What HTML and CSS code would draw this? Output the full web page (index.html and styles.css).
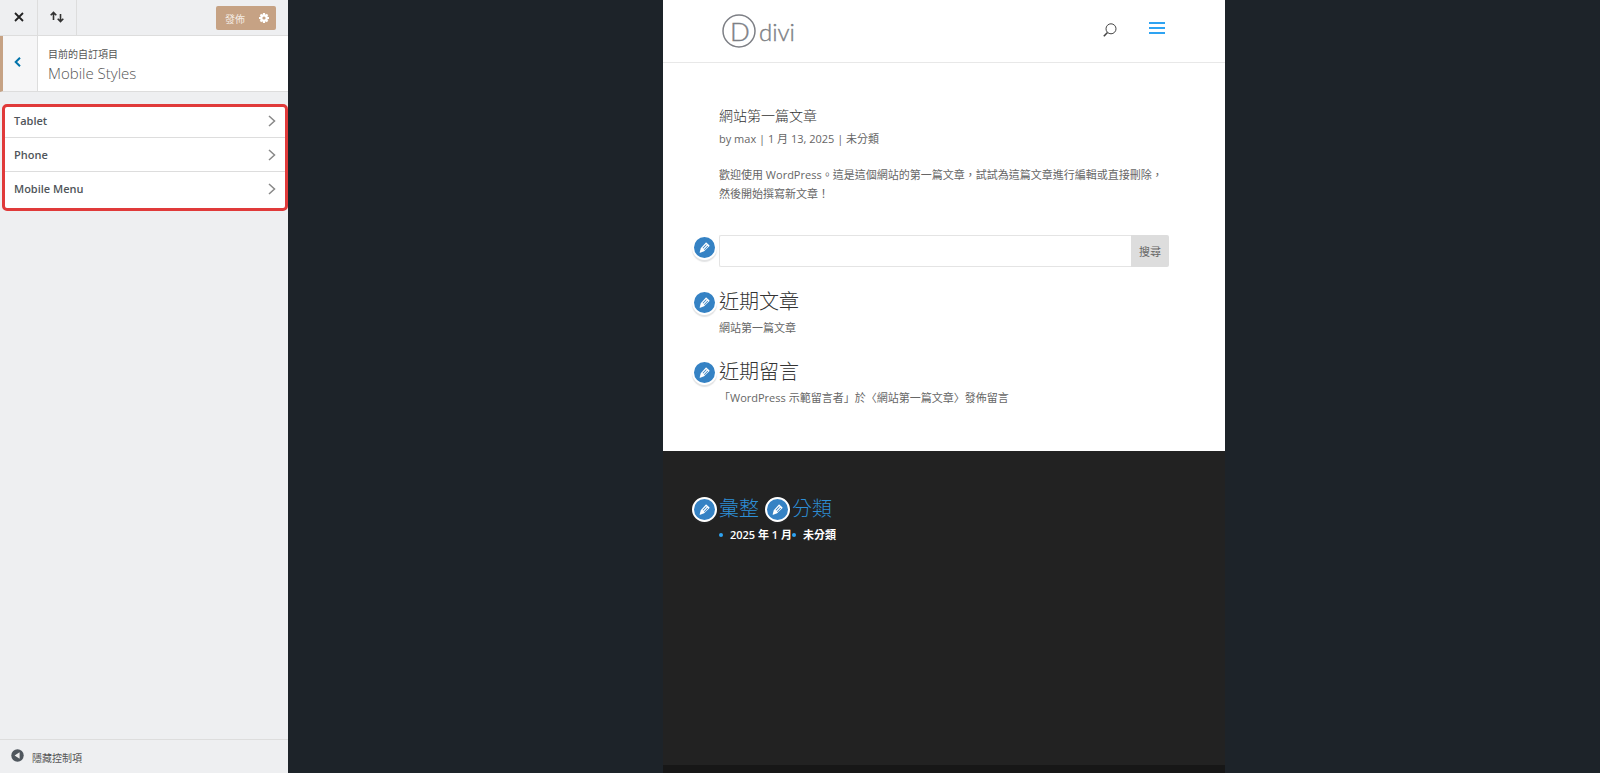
FILE: index.html
```
<!DOCTYPE html>
<html lang="zh-Hant">
<head>
	<meta charset="UTF-8">
	<title>Mobile Styles</title>
	<link rel="stylesheet" href="styles.css">
</head>
<body>
	<svg class="defs" aria-hidden="true">
		<symbol id="pencil" viewBox="0 0 20 20">
			<path fill="#fff" fill-rule="evenodd" d="M13.200 2.600l4.200 3.800c.5.5.5 1.100 0 1.600l-8 7.900-6 2.200c-.6.2-1-.2-.8-.8l1.600-6.100 7.600-8.500c.4-.5.9-.5 1.400-.1zM7 10.800l1 .9 5.400-5.900-1-.8zM9.200 12.900l1 .9 5.400-5.700-1-.9z"/>
		</symbol>
	</svg>
	<div class="customizer">
		<aside class="sidebar">
			<div class="topbar">
				<button type="button" class="close" aria-label="關閉">
					<svg width="10" height="10" viewBox="0 0 10 10"><path d="M1 1l8 8M9 1l-8 8" stroke="#222" stroke-width="1.800"/></svg>
				</button>
				<button type="button" class="sort" aria-label="切換">
					<svg width="14" height="12" viewBox="0 0 14 12" fill="none" stroke="#333" stroke-width="1.600"><path d="M3.500 9V1.500M.7 4.300l2.800-2.800 2.800 2.800M10.500 3v7.500M7.700 7.700l2.800 2.800 2.800-2.800"/></svg>
				</button>
				<button type="button" class="publish">
					<span>發佈</span>
					<svg width="10" height="10" viewBox="0 0 10 10"><path d="M5 0v10M0 5h10M1.500 1.500l7 7M8.500 1.500l-7 7" stroke="#fff" stroke-width="2.200"/><circle cx="5" cy="5" r="3.800" fill="#fff"/><circle cx="5" cy="5" r="1.600" fill="#c6a284"/></svg>
				</button>
			</div>
			<div class="panel-title">
				<button type="button" class="back" aria-label="返回">
					<svg width="7" height="10" viewBox="0 0 7 10"><path d="M6 .8L1.700 5 6 9.200" fill="none" stroke="#0073aa" stroke-width="2"/></svg>
				</button>
				<div class="panel-text">
					<span>目前的自訂項目</span>
					<h1>Mobile Styles</h1>
				</div>
			</div>
			<ul class="sections">
				<li><a href="#">Tablet<svg width="8" height="12" viewBox="0 0 8 12"><path d="M1 1l5.500 5L1 11"/></svg></a></li>
				<li><a href="#">Phone<svg width="8" height="12" viewBox="0 0 8 12"><path d="M1 1l5.500 5L1 11"/></svg></a></li>
				<li><a href="#">Mobile Menu<svg width="8" height="12" viewBox="0 0 8 12"><path d="M1 1l5.500 5L1 11"/></svg></a></li>
			</ul>
			<button type="button" class="collapse">
				<svg width="13" height="13" viewBox="0 0 13 13"><circle cx="6.500" cy="6.500" r="6.200" fill="#50575e"/><path d="M8.600 3.300v6.400L3.600 6.500z" fill="#eee"/></svg>
				<span>隱藏控制項</span>
			</button>
		</aside>
		<div class="preview">
			<div class="device">
				<header class="site-header">
					<a href="#" class="logo" aria-label="divi">
						<svg width="76" height="36" viewBox="0 0 76 36">
							<circle cx="18" cy="18" r="16" fill="none" stroke="#7d7f85" stroke-width="1.500"/>
							<text x="9" y="28" font-size="26">D</text>
							<text x="38" y="28" font-size="24">divi</text>
						</svg>
					</a>
					<button type="button" class="search-icon" aria-label="搜尋">
						<svg width="14" height="14" viewBox="0 0 14 14" fill="none" stroke="#444"><circle cx="8" cy="5.800" r="5"/><path d="M4.500 9.500L.8 13.200" stroke-width="1.600"/></svg>
					</button>
					<button type="button" class="menu-icon" aria-label="選單">
						<svg width="16" height="12" viewBox="0 0 16 12" stroke="#2ea3f2" stroke-width="2"><path d="M0 1h16M0 6h16M0 11h16"/></svg>
					</button>
				</header>
				<main class="content">
					<article>
						<h2>網站第一篇文章</h2>
						<p class="meta">by max | 1 月 13, 2025 | 未分類</p>
						<p>歡迎使用 WordPress。這是這個網站的第一篇文章，試試為這篇文章進行編輯或直接刪除，然後開始撰寫新文章！</p>
					</article>
					<form class="widget search">
						<button type="button" class="edit" aria-label="編輯"><svg><use href="#pencil"/></svg></button>
						<input type="text" aria-label="搜尋">
						<button type="submit" class="submit">搜尋</button>
					</form>
					<section class="widget">
						<button type="button" class="edit" aria-label="編輯"><svg><use href="#pencil"/></svg></button>
						<h3>近期文章</h3>
						<a href="#">網站第一篇文章</a>
					</section>
					<section class="widget">
						<button type="button" class="edit" aria-label="編輯"><svg><use href="#pencil"/></svg></button>
						<h3>近期留言</h3>
						<p>「WordPress 示範留言者」於〈網站第一篇文章〉發佈留言</p>
					</section>
				</main>
				<footer class="site-footer">
					<section class="widget">
						<button type="button" class="edit" aria-label="編輯"><svg><use href="#pencil"/></svg></button>
						<h3>彙整</h3>
						<ul><li><a href="#">2025 年 1 月</a></li></ul>
					</section>
					<section class="widget">
						<button type="button" class="edit" aria-label="編輯"><svg><use href="#pencil"/></svg></button>
						<h3>分類</h3>
						<ul><li><a href="#">未分類</a></li></ul>
					</section>
				</footer>
				<div class="footer-bottom"></div>
			</div>
		</div>
	</div>
</body>
</html>
```
FILE: styles.css
```
*{
	box-sizing: border-box;
	margin: 0;
	padding: 0;
}
body{
	font-family: "Open Sans", "Noto Sans CJK TC", sans-serif;
	font-size: 11px;
	line-height: 19px;
	color: #666;
	background: #1d2329;
}
button{
	border: 0;
	background: none;
	font: inherit;
	color: inherit;
	cursor: pointer;
}
a{
	color: inherit;
	text-decoration: none;
}
ul{
	list-style: none;
}
svg{
	display: block;
}
.defs{
	display: none;
}
.customizer{
	display: flex;
	min-height: 100vh;
}

/* sidebar */
.sidebar{
	display: flex;
	flex-direction: column;
	flex: 0 0 288px;
	background: #eeeff1;
}
.topbar{
	display: flex;
	align-items: center;
	height: 36px;
	padding-right: 12px;
	border-bottom: 1px solid #ddd;
}
.close, .sort{
	display: flex;
	align-items: center;
	justify-content: center;
	height: 35px;
	padding-bottom: 2px;
	border-right: 1px solid #ddd;
}
.close{
	width: 38px;
}
.sort{
	width: 39px;
}
.publish{
	display: flex;
	align-items: center;
	justify-content: space-between;
	width: 60px;
	height: 24px;
	margin-left: auto;
	padding: 0 7px 0 9px;
	border-radius: 2px;
	background: #c6a284;
	color: #f4ebe3;
	font-size: 10px;
}
.publish span{
	padding-top: 3px;
}
.panel-title{
	display: flex;
	height: 56px;
	border-bottom: 1px solid #ddd;
	border-left: 3px solid #c6a284;
	background: #fff;
}
.back{
	display: flex;
	align-items: center;
	justify-content: center;
	width: 35px;
	padding: 0 5px 4px 0;
	border-right: 1px solid #ddd;
	background: #f6f6f7;
}
.panel-text{
	padding: 9px 10px;
	font-size: 10px;
	color: #555;
}
.panel-text span{
	display: block;
	line-height: 18px;
}
.panel-text h1{
	font-size: 15px;
	font-weight: 300;
	line-height: 20px;
}
.sections{
	margin: 12px 0 0 2px;
	border: 3px solid #e03a3a;
	border-radius: 5px;
	background: #fff;
}
.sections li + li{
	border-top: 1px solid #ddd;
}
.sections a{
	display: flex;
	align-items: center;
	justify-content: space-between;
	padding: 7px 9px;
	font-weight: 600;
	color: #50555a;
}
.sections li:first-child a{
	padding-top: 4px;
}
.sections li:last-child a{
	padding-bottom: 10px;
}
.sections path{
	fill: none;
	stroke: #888;
	stroke-width: 1.5;
}
.collapse{
	display: flex;
	gap: 8px;
	height: 34px;
	margin-top: auto;
	padding: 9px 11px;
	border-top: 1px solid #ddd;
	color: #555;
	font-size: 10px;
}

/* preview */
.preview{
	flex: 1;
	display: flex;
	justify-content: center;
}
.device{
	display: flex;
	flex-direction: column;
	width: 100%;
	max-width: 562px;
	background: #fff;
}
.site-header{
	display: flex;
	align-items: center;
	height: 63px;
	padding: 0 60px 0 58px;
	border-bottom: 1px solid #e8e8e8;
}
.logo{
	margin-right: auto;
}
.logo text{
	font-family: Lato, sans-serif;
	font-weight: 300;
	fill: #7d7f85;
	stroke: #7d7f85;
	stroke-width: .4;
}
.search-icon{
	margin-right: 32px;
	padding-bottom: 2px;
}
.menu-icon{
	padding-bottom: 6px;
}
.content{
	padding: 44px 56px;
}
h2{
	font-size: 14px;
	font-weight: 300;
	line-height: 18px;
	color: #333;
}
.meta{
	margin: 4px 0 17px;
}
.widget{
	position: relative;
}
.content .widget{
	margin-top: 23px;
}
.content .search{
	display: flex;
	height: 32px;
	margin-top: 32px;
}
.search input{
	flex: 1;
	min-width: 0;
	padding: 0 8px;
	border: 1px solid #e4e4e4;
	border-right: 0;
	border-radius: 2px 0 0 2px;
	font: inherit;
}
.submit{
	width: 38px;
	border-radius: 0 2px 2px 0;
	background: #ddd;
}
h3{
	margin-bottom: 4px;
	font-size: 20px;
	font-weight: 300;
	line-height: 24px;
	color: #333;
}
.edit{
	position: absolute;
	top: 0;
	left: -27px;
	display: flex;
	align-items: center;
	justify-content: center;
	width: 25px;
	height: 25px;
	border: 2px solid #fff;
	border-radius: 50%;
	background: #3582c4;
	box-shadow: 0 2px 1px rgba(60,67,74,.15);
}
.edit svg{
	width: 13px;
	height: 13px;
}
.site-footer{
	flex: 1;
	display: flex;
	padding: 46px 56px;
	background: #222;
	font-weight: 600;
	color: #fff;
}
.site-footer h3{
	color: #2e8fd6;
}
.site-footer li{
	display: flex;
	align-items: center;
	gap: 7px;
	white-space: nowrap;
}
.site-footer li::before{
	content: "";
	width: 4px;
	height: 4px;
	border-radius: 50%;
	background: #2ea3f2;
}
.footer-bottom{
	height: 8px;
	background: #171717;
}
```
